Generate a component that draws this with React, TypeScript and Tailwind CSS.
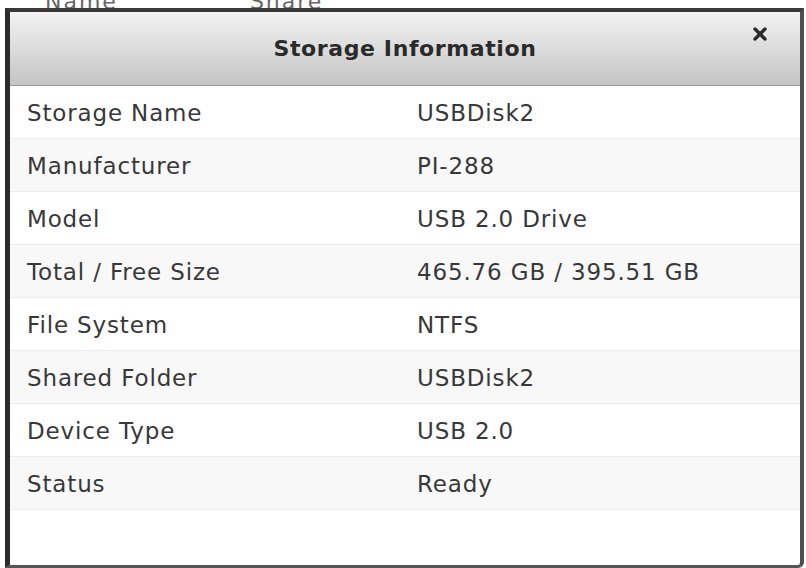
import React from "react";

const rows: [string, string][] = [
  ["Storage Name", "USBDisk2"],
  ["Manufacturer", "PI-288"],
  ["Model", "USB 2.0 Drive"],
  ["Total / Free Size", "465.76 GB / 395.51 GB"],
  ["File System", "NTFS"],
  ["Shared Folder", "USBDisk2"],
  ["Device Type", "USB 2.0"],
  ["Status", "Ready"],
];

export default function App() {
  return (
    <div
      className="relative w-[806px] h-[568px] bg-white overflow-hidden"
      style={{ fontFamily: '"DejaVu Sans", Verdana, sans-serif' }}
    >
      <div className="h-[8px] overflow-hidden relative">
        <div className="flex text-[22px] text-[#666] leading-none mt-[-9px] tracking-[2px]">
          <span className="ml-[45px]">Name</span>
          <span className="ml-[132px]">Share</span>
        </div>
      </div>
      <div className="ml-[5px] w-[799px] h-[560px] border-l-[5px] border-t-[4px] border-r-[4px] border-b-[3px] border-l-[#2c2c2c] border-t-[#383838] border-r-[#4e4e4e] border-b-[#555] rounded-br-[6px] bg-white flex flex-col overflow-hidden">
        <div className="relative h-[74px] shrink-0 bg-gradient-to-b from-[#f2f2f2] via-[#dcdcdc] to-[#c4c4c4] border-b border-[#9a9a9a] flex items-center justify-center">
          <span className="text-[22px] font-bold text-[#2a2a2a] tracking-[0.6px]">
            Storage Information
          </span>
          <svg
            className="absolute right-[32px] top-[14px]"
            width="16"
            height="16"
            viewBox="0 0 16 16"
          >
            <path
              d="M3 3 L13 13 M13 3 L3 13"
              stroke="#2a2a2a"
              strokeWidth="3.4"
              strokeLinecap="round"
            />
          </svg>
        </div>
        <div className="flex flex-col">
          {rows.map(([k, v], i) => (
            <div
              key={k}
              className={`flex h-[53px] items-center pt-[3px] border-b border-[#ececec] text-[23px] text-[#383838] tracking-[0.85px] ${
                i % 2 === 1 ? "bg-[#f8f8f8]" : "bg-white"
              }`}
            >
              <div className="w-[390px] pl-[17px]">{k}</div>
              <div className="pl-[17px]">{v}</div>
            </div>
          ))}
        </div>
      </div>
    </div>
  );
}
